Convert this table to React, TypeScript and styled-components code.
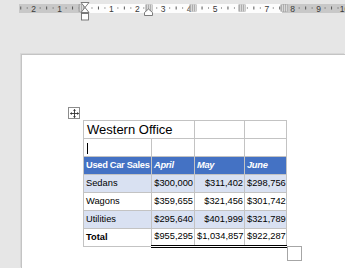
import styled, { createGlobalStyle } from "styled-components";

const GlobalStyle = createGlobalStyle`
  body {
    margin: 0;
    background: #e6e6e6;
    font-family: "Liberation Sans", Arial, sans-serif;
  }
`;

const Frame = styled.div`
  width: 345px;
  height: 268px;
  overflow: hidden;
  display: flex;
  flex-direction: column;
  background: #e6e6e6;
`;

const RulerBox = styled.div`
  height: 24px;
  flex-shrink: 0;
  svg {
    display: block;
  }
`;

const Page = styled.div`
  flex: 1;
  margin: 30px 0 0 21px;
  background: #fff;
  border-left: 1px solid #c4c4c4;
  border-top: 1px solid #c4c4c4;
  box-shadow: -1px -1px 0 #d8d8d8;
  padding: 65px 0 0 61px;
`;

const TableWrap = styled.div`
  position: relative;
  display: inline-block;
`;

const MoveHandle = styled.div`
  position: absolute;
  left: -15px;
  top: -13px;
  width: 10px;
  height: 10px;
  border: 1px solid #8c8c8c;
  background: #fff;
  display: flex;
  align-items: center;
  justify-content: center;
`;

const ResizeHandle = styled.div`
  position: absolute;
  right: -15px;
  bottom: -13px;
  width: 13px;
  height: 13px;
  border: 1px solid #a6a6a6;
  background: #fff;
`;

const Grid = styled.table`
  border-collapse: collapse;
  table-layout: fixed;
  width: 203px;
  font-size: 9.3px;
  color: #000;
`;

const Col = styled.col<{ $w: number }>`
  width: ${(p) => p.$w}px;
`;

const Row = styled.tr`
  height: 18px;
`;

type Variant = "plain" | "head" | "shade";

const Cell = styled.td<{
  $variant?: Variant;
  $num?: boolean;
  $bold?: boolean;
  $italic?: boolean;
  $rule?: boolean;
  $big?: boolean;
}>`
  border: 1px solid #c3c3c3;
  padding: 0 ${(p) => (p.$num ? "1px" : "2px")} 0 ${(p) => (p.$big ? "3px" : "2px")};
  white-space: nowrap;
  overflow: hidden;
  text-align: ${(p) => (p.$num ? "right" : "left")};
  font-weight: ${(p) => (p.$bold ? 700 : 400)};
  font-style: ${(p) => (p.$italic ? "italic" : "normal")};
  font-size: ${(p) => (p.$big ? "13px" : "inherit")};
  letter-spacing: ${(p) => (p.$variant === "head" ? "-0.3px" : "0")};
  line-height: 1;
  color: ${(p) => (p.$variant === "head" ? "#fff" : "#000")};
  background: ${(p) =>
    p.$variant === "head" ? "#4472c4" : p.$variant === "shade" ? "#d9e1f2" : "#fff"};
  ${(p) =>
    p.$rule &&
    `border-top: 1px solid #000; border-bottom: 3px double #000;`}
`;

const Caret = styled.span`
  display: inline-block;
  width: 1px;
  height: 11px;
  background: #000;
  vertical-align: middle;
`;

const U = 25.9;
const O = 85;

function Hatch({ x }: { x: number }) {
  return (
    <g>
      <rect x={x - 3.5} y={4.5} width={7} height={7} fill="#8a8a8a" />
      {[6, 8, 10].map((y) => (
        <line key={y} x1={x - 3.5} x2={x + 3.5} y1={y} y2={y} stroke="#e4e4e4" strokeWidth={0.8} />
      ))}
      {[-1.5, 0.5, 2.5].map((d) => (
        <line key={d} x1={x + d} x2={x + d} y1={4.5} y2={11.5} stroke="#e4e4e4" strokeWidth={0.8} />
      ))}
    </g>
  );
}

function Ruler() {
  const nums: number[] = [-2, -1, 1, 2, 3, 4, 5, 7, 8, 9, 10];
  const marks: JSX.Element[] = [];
  for (let k = -3; k <= 10; k++) {
    const b = O + k * U;
    [0.25, 0.75].forEach((f) => {
      const x = b + f * U;
      if (x > 19 && x < 345) marks.push(<rect key={`d${k}${f}`} x={x} y={7.5} width={1} height={1} fill="#555" />);
    });
    const t = b + 0.5 * U;
    if (t > 19 && t < 345) marks.push(<rect key={`t${k}`} x={t} y={6.5} width={1} height={3} fill="#555" />);
  }
  return (
    <svg width={345} height={24} viewBox="0 0 345 24">
      <rect x={19} y={4} width={65} height={9} fill="#c8c8c8" />
      <rect x={84} y={4} width={198} height={9} fill="#fdfdfd" />
      <rect x={282} y={4} width={63} height={9} fill="#c8c8c8" />
      {marks}
      {nums.map((n) => (
        <text
          key={n}
          x={O + n * U + 0.5}
          y={11.5}
          fontSize={8.5}
          fontFamily="Liberation Sans, Arial, sans-serif"
          fill="#3a3a3a"
          textAnchor="middle"
        >
          {Math.abs(n)}
        </text>
      ))}
      <Hatch x={149} />
      <Hatch x={193} />
      <Hatch x={242} />
      <Hatch x={284} />
      <Hatch x={82} />
      <path d="M81 2.5 H89 L85 7.5 Z" fill="#fff" stroke="#6e6e6e" strokeWidth={0.9} />
      <path d="M85 7.5 L81 12.5 H89 Z" fill="#fff" stroke="#6e6e6e" strokeWidth={0.9} />
      <rect x={81.5} y={13.5} width={7} height={6.5} fill="#fff" stroke="#6e6e6e" strokeWidth={0.9} />
      <path d="M144.5 15.5 V12.5 L148.5 9 L152.5 12.5 V15.5 Z" fill="#fff" stroke="#6e6e6e" strokeWidth={0.9} />
    </svg>
  );
}

function MoveIcon() {
  return (
    <svg width={9} height={9} viewBox="0 0 9 9">
      <path d="M4.5 0.5 V8.5 M0.5 4.5 H8.5" stroke="#333" strokeWidth={0.9} />
      <path d="M4.5 0 L3 1.8 H6 Z M4.5 9 L3 7.2 H6 Z M0 4.5 L1.8 3 V6 Z M9 4.5 L7.2 3 V6 Z" fill="#333" />
    </svg>
  );
}

const body: { label: string; v: string[]; shade: boolean }[] = [
  { label: "Sedans", v: ["$300,000", "$311,402", "$298,756"], shade: true },
  { label: "Wagons", v: ["$359,655", "$321,456", "$301,742"], shade: false },
  { label: "Utilities", v: ["$295,640", "$401,999", "$321,789"], shade: true },
];

export default function App() {
  return (
    <Frame>
      <GlobalStyle />
      <RulerBox>
        <Ruler />
      </RulerBox>
      <Page>
        <TableWrap>
          <MoveHandle>
            <MoveIcon />
          </MoveHandle>
          <Grid>
            <colgroup>
              {[68, 43, 50, 42].map((w, i) => (
                <Col key={i} $w={w} />
              ))}
            </colgroup>
            <tbody>
              <Row>
                <Cell $big colSpan={2}>
                  Western Office
                </Cell>
                <Cell />
                <Cell />
              </Row>
              <Row>
                <Cell $big>
                  <Caret />
                </Cell>
                <Cell />
                <Cell />
                <Cell />
              </Row>
              <Row>
                <Cell $variant="head" $bold>
                  Used Car Sales
                </Cell>
                {["April", "May", "June"].map((m) => (
                  <Cell key={m} $variant="head" $bold $italic>
                    {m}
                  </Cell>
                ))}
              </Row>
              {body.map((r) => (
                <Row key={r.label}>
                  <Cell $variant={r.shade ? "shade" : "plain"}>{r.label}</Cell>
                  {r.v.map((v) => (
                    <Cell key={v} $num $variant={r.shade ? "shade" : "plain"}>
                      {v}
                    </Cell>
                  ))}
                </Row>
              ))}
              <Row>
                <Cell $bold>Total</Cell>
                {["$955,295", "$1,034,857", "$922,287"].map((v) => (
                  <Cell key={v} $num $rule>
                    {v}
                  </Cell>
                ))}
              </Row>
            </tbody>
          </Grid>
          <ResizeHandle />
        </TableWrap>
      </Page>
    </Frame>
  );
}
